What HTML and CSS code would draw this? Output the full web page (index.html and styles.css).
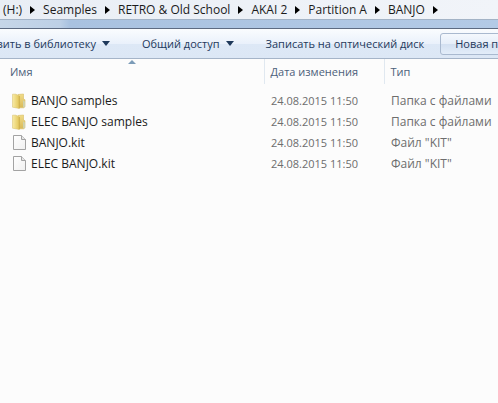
FILE: index.html
```html
<!DOCTYPE html>
<html lang="ru">
<head>
	<meta charset="UTF-8">
	<title>BANJO</title>
	<link rel="stylesheet" href="styles.css">
</head>
<body>
	<svg class="defs" width="0" height="0">
		<defs>
			<linearGradient id="front" x1="0" y1="0" x2="1" y2="0">
				<stop offset="0" stop-color="#f8eba6"/>
				<stop offset="1" stop-color="#e3c658"/>
			</linearGradient>
			<linearGradient id="back" x1="0" y1="0" x2="0" y2="1">
				<stop offset="0" stop-color="#f1dc88"/>
				<stop offset="1" stop-color="#d9b957"/>
			</linearGradient>
			<linearGradient id="paper" x1="0" y1="0" x2="1" y2="1">
				<stop offset="0" stop-color="#ffffff"/>
				<stop offset="1" stop-color="#f0f0f0"/>
			</linearGradient>
			<symbol id="folder" viewBox="0 0 16 16">
				<path d="M6 1.5L11.5 1v5l1.5.8v7l-1.5 1H6z" fill="url(#back)" stroke="#d6bd67" stroke-width=".6"/>
				<path d="M11 7.5c1.6 0 2 1 2 3v3.2l-2 .8z" fill="#d0d2ac"/>
				<path d="M.5 1.2H4L7.3 3v12.4L.5 14.2z" fill="url(#front)" stroke="#dcc679" stroke-width=".6"/>
				<path d="M7.3 3v12.2" stroke="#c9a83f" stroke-width=".8"/>
			</symbol>
			<symbol id="file" viewBox="0 0 16 16">
				<path d="M1.5.5h8l4 4v10h-12z" fill="url(#paper)" stroke="#a3a3a3"/>
				<path d="M9.5.5v4h4" fill="#e6e6e6" stroke="#a3a3a3"/>
			</symbol>
		</defs>
	</svg>
	<!-- адресная строка -->
	<nav class="address">
		<a href="#">(H:)</a><i class="next"></i>
		<a href="#">Seamples</a><i class="next"></i>
		<a href="#">RETRO &amp; Old School</a><i class="next"></i>
		<a href="#">AKAI 2</a><i class="next"></i>
		<a href="#">Partition A</a><i class="next"></i>
		<a href="#">BANJO</a><i class="next"></i>
	</nav>
	<div class="glass"></div>
	<!-- панель команд -->
	<div class="toolbar">
		<button type="button" class="first">вить в библиотеку<i class="drop"></i></button>
		<button type="button">Общий доступ<i class="drop"></i></button>
		<button type="button">Записать на оптический диск</button>
		<button type="button" class="active">Новая папка</button>
	</div>
	<!-- список файлов -->
	<table class="files">
		<thead>
			<tr>
				<th class="name">Имя<i class="sort"></i></th>
				<th class="date">Дата изменения</th>
				<th>Тип</th>
			</tr>
		</thead>
		<tbody>
			<tr>
				<td><div class="item"><svg class="icon"><use href="#folder"/></svg>BANJO samples</div></td>
				<td class="time">24.08.2015 11:50</td>
				<td>Папка с файлами</td>
			</tr>
			<tr>
				<td><div class="item"><svg class="icon"><use href="#folder"/></svg>ELEC BANJO samples</div></td>
				<td class="time">24.08.2015 11:50</td>
				<td>Папка с файлами</td>
			</tr>
			<tr>
				<td><div class="item"><svg class="icon"><use href="#file"/></svg>BANJO.kit</div></td>
				<td class="time">24.08.2015 11:50</td>
				<td>Файл "KIT"</td>
			</tr>
			<tr>
				<td><div class="item"><svg class="icon"><use href="#file"/></svg>ELEC BANJO.kit</div></td>
				<td class="time">24.08.2015 11:50</td>
				<td>Файл "KIT"</td>
			</tr>
		</tbody>
	</table>
</body>
</html>
```
FILE: styles.css
```css
*{
	margin:0;
	padding:0;
	box-sizing:border-box;
}
body{
	background:#fcfcfc;
	font:12px/18px "Open Sans","Noto Sans",sans-serif;
	color:#1b1b1b;
	overflow:hidden;
}
.defs{
	position:absolute;
}
.address{
	display:flex;
	align-items:center;
	gap:8px;
	height:20px;
	padding-left:3px;
	background:linear-gradient(to right,#e9eef5,#f1f4f9);
	border-bottom:1px solid #a3b3c6;
	white-space:nowrap;
}
.address a{
	color:#1b1b1b;
	text-decoration:none;
}
.next{
	flex:none;
	border:4px solid transparent;
	border-left:5px solid #000;
	border-right:0;
}
.glass{
	height:9px;
	background:linear-gradient(to right,#c6d6e8,#bdd0e6 12%,#a9c2e0 14%,#b3cae6);
	border-bottom:1px solid #5d6b82;
}
.toolbar{
	display:flex;
	align-items:center;
	height:30px;
	background:linear-gradient(#fafcfe,#eaf1fb 50%,#dde8f6 52%,#dce7f5);
	border-bottom:1px solid #a5b4c8;
	overflow:hidden;
}
.toolbar button{
	display:flex;
	flex:none;
	align-items:center;
	gap:6px;
	height:22px;
	padding:0 16px;
	background:none;
	border:0;
	font:inherit;
	font-size:11px;
	color:#1e395b;
	white-space:nowrap;
}
.toolbar .first{
	justify-content:flex-end;
	width:126px;
	padding-left:0;
}
.toolbar .active{
	padding:0 14px;
	background:linear-gradient(#f4f8fd,#e6eef9 50%,#d3e0f1 52%,#e3edf9);
	border:1px solid #a9b9cf;
	border-radius:3px;
}
.drop{
	border:4px solid transparent;
	border-top:5px solid #1e395b;
	border-bottom:0;
}
.files{
	width:100%;
	table-layout:fixed;
	border-collapse:collapse;
	white-space:nowrap;
}
.files th{
	position:relative;
	height:25px;
	padding-left:6px;
	font-size:11px;
	font-weight:normal;
	text-align:left;
	color:#4c607a;
	border-left:1px solid #e0e8f0;
}
.files .name{
	width:264px;
	padding-left:10px;
	border-left:0;
}
.files .date{
	width:120px;
}
.sort{
	position:absolute;
	top:1px;
	left:50%;
	border:4px solid transparent;
	border-top:0;
	border-bottom:4px solid #7c9cb8;
	transform:translateX(-50%);
}
.files td{
	height:21px;
	padding-left:7px;
	color:#6d6d6d;
}
.files .time{
	font-size:11px;
}
.files tbody:before{
	content:"";
	display:block;
	height:6px;
}
.files td:first-child{
	padding-left:12px;
	color:#1b1b1b;
}
.item{
	display:flex;
	align-items:center;
	gap:3px;
}
.icon{
	width:16px;
	height:16px;
}
```
